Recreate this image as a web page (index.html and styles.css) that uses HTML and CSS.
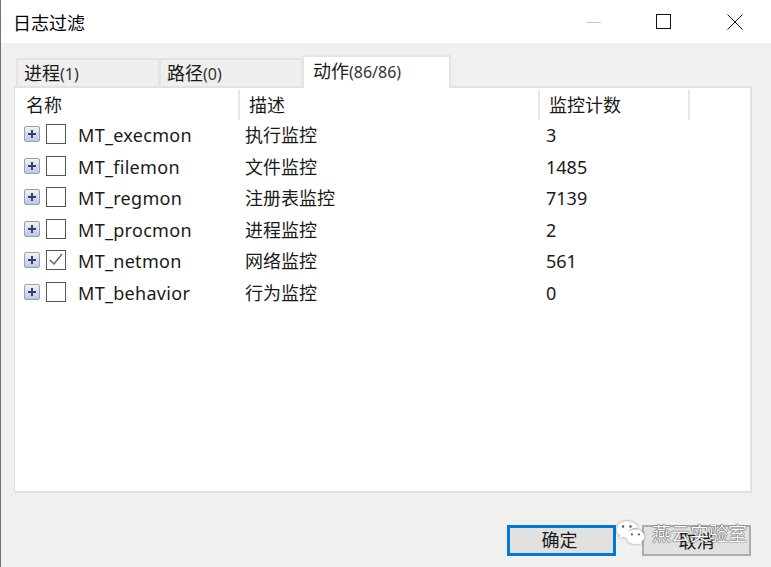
FILE: index.html
```html
<!doctype html>
<html>
<head>
    <meta charset="utf-8">
    <title>日志过滤</title>
    <link rel="stylesheet" href="styles.css">
</head>
<body>

<div class="window">

    <div class="titlebar">
        <span class="title">日志过滤</span>
        <div class="winbtns">
            <svg class="winbtn min" width="16" height="16" viewBox="0 0 16 16"><path d="M0 8.500H15" stroke="#c4c4c4" fill="none"/></svg>
            <svg class="winbtn" width="16" height="16" viewBox="0 0 16 16"><rect x="0.500" y="0.500" width="14" height="14" stroke="#111" fill="none"/></svg>
            <svg class="winbtn" width="16" height="16" viewBox="0 0 16 16"><path d="M0.500 0.500L15.500 15.500M15.500 0.500L0.500 15.500" stroke="#111" fill="none"/></svg>
        </div>
    </div>

    <div class="content">

        <div class="tabs">
            <div class="tab">进程<span class="num">(1)</span></div>
            <div class="tab">路径<span class="num">(0)</span></div>
            <div class="tab active">动作<span class="num">(86/86)</span></div>
        </div>

        <div class="panel">
            <div class="head">
                <div class="col-name">名称</div>
                <div class="col-desc">描述</div>
                <div class="col-count">监控计数</div>
                <div class="col-rest"></div>
            </div>

            <div class="row">
                <div class="col-name"><span class="plus"></span><span class="check"></span><span class="label">MT_execmon</span></div>
                <div class="col-desc">执行监控</div>
                <div class="col-count">3</div>
            </div>
            <div class="row">
                <div class="col-name"><span class="plus"></span><span class="check"></span><span class="label">MT_filemon</span></div>
                <div class="col-desc">文件监控</div>
                <div class="col-count">1485</div>
            </div>
            <div class="row">
                <div class="col-name"><span class="plus"></span><span class="check"></span><span class="label">MT_regmon</span></div>
                <div class="col-desc">注册表监控</div>
                <div class="col-count">7139</div>
            </div>
            <div class="row">
                <div class="col-name"><span class="plus"></span><span class="check"></span><span class="label">MT_procmon</span></div>
                <div class="col-desc">进程监控</div>
                <div class="col-count">2</div>
            </div>
            <div class="row">
                <div class="col-name"><span class="plus"></span>
                    <span class="check"><svg width="18" height="18" viewBox="0 0 18 18"><path d="M3 9L7 13L15 3" stroke="#666" stroke-width="1.500" fill="none"/></svg></span>
                    <span class="label">MT_netmon</span></div>
                <div class="col-desc">网络监控</div>
                <div class="col-count">561</div>
            </div>
            <div class="row">
                <div class="col-name"><span class="plus"></span><span class="check"></span><span class="label">MT_behavior</span></div>
                <div class="col-desc">行为监控</div>
                <div class="col-count">0</div>
            </div>
        </div>

        <div class="buttons">
            <div class="btn default">确定</div>
            <div class="btn">取消</div>
        </div>

    </div>

    <!-- watermark over the buttons -->
    <div class="watermark">
        <svg class="wm-icon" width="31" height="26" viewBox="0 0 32 28">
            <path d="M12 1C5.500 1 1 5 1 10C1 13 2.600 15.400 5 17L4 20L8 18.300C9.500 18.800 11 19 12.500 19C12 12 17 8 24 8.500C23 4 18 1 12 1Z" fill="#fff"/>
            <path d="M21 10C15.500 10 11.500 13.500 11.500 18C11.500 22.500 15.500 26 21 26C22.300 26 23.500 25.800 24.500 25.400L28 27L27.200 24C29.500 22.500 31 20.400 31 18C31 13.500 26.500 10 21 10Z" fill="#fff"/>
            <circle cx="8" cy="7" r="1.300" fill="#555"/>
            <circle cx="16" cy="7" r="1.300" fill="#555"/>
            <circle cx="17.500" cy="15.500" r="1.100" fill="#555"/>
            <circle cx="25" cy="15.500" r="1.100" fill="#555"/>
        </svg>
        <span class="wm-text">燕云实验室</span>
    </div>

</div>

</body>
</html>
```

FILE: styles.css
```css
* {
    box-sizing: border-box;
}

html, body {
    margin: 0;
    height: 100%;
}

body {
    overflow: hidden;
    color: #1a1a1a;
    font-family: "Noto Sans", "Noto Sans CJK SC", sans-serif;
    font-size: 18px;
}

.window {
    position: relative;
    width: 771px;
    height: 567px;
    display: flex;
    flex-direction: column;
    border-left: 1px solid #707070;
    background: #f0f0f0;
}

.titlebar {
    height: 43px;
    flex: none;
    display: flex;
    align-items: center;
    justify-content: space-between;
    padding-left: 12px;
    padding-right: 28px;
    background: #fff;
}

.title {
    color: #000;
    font-size: 18px;
}

.winbtns {
    display: flex;
    gap: 55px;
}

.winbtn.min {
    margin-right: -1px;
}

.content {
    flex: 1;
    padding: 12px 19px 0 13px;
}

.tabs {
    display: flex;
    height: 31px;
    padding-left: 2px;
    align-items: flex-end;
}

.tab {
    width: 143px;
    height: 28px;
    padding-left: 6px;
    line-height: 26px;
    border: 2px solid #e4e4e4;
    border-bottom: 0;
    border-right-width: 1px;
    background: #efefef;
}

.tab.active {
    width: 149px;
    padding-left: 9px;
    line-height: 28px;
    border-right-width: 2px;
    background: #fff;
    position: relative;
    z-index: 1;
    margin-bottom: -2px;
    height: 33px;
}

.num {
    color: #333;
    font-size: 16px;
}

.panel {
    height: 407px;
    padding-top: 2px;
    background: #fff;
    border: 2px solid #e2e2e2;
    border-left-width: 1px;
    width: 738px;
}

.head, .row {
    display: flex;
}

.head {
    height: 30px;
    line-height: 31px;
}

.head .col-name {
    padding-left: 11px;
}

.head .col-name, .head .col-desc, .head .col-count {
    border-right: 2px solid #e8e8e8;
}

.head .col-desc {
    padding-left: 9px;
}

.head .col-count {
    padding-left: 9px;
}

.col-name {
    width: 225px;
    flex: none;
    display: flex;
    align-items: center;
}

.col-desc {
    width: 300px;
    flex: none;
    padding-left: 5px;
}

.col-count {
    width: 150px;
    flex: none;
    padding-left: 6px;
}

.row {
    height: 31.500px;
    line-height: 31px;
}

.row .col-name {
    padding-left: 9px;
}

.plus {
    position: relative;
    width: 16px;
    height: 16px;
    flex: none;
    margin-bottom: 3px;
    border: 1px solid #8fa3bd;
    border-radius: 2px;
    background: linear-gradient(#eef3fa, #b9c9e0);
}

.plus::before {
    content: "";
    position: absolute;
    left: 3px;
    top: 6px;
    width: 8px;
    height: 2px;
    background: #2f4468;
}

.plus::after {
    content: "";
    position: absolute;
    left: 6px;
    top: 3px;
    width: 2px;
    height: 8px;
    background: #2f4468;
}

.check {
    width: 20px;
    height: 20px;
    flex: none;
    margin-left: 6px;
    margin-bottom: 3px;
    border: 1px solid #555;
    background: #fff;
    display: flex;
}

.label {
    margin-left: 12px;
    font-size: 18px;
    letter-spacing: 0.300px;
}

.buttons {
    display: flex;
    justify-content: flex-end;
    gap: 26px;
    margin-top: 32px;
    width: 737px;
}

.btn {
    width: 109px;
    height: 31px;
    text-align: center;
    line-height: 28px;
    background: #e1e1e1;
    border: 2px solid #adadad;
}

.btn.default {
    border: 3px solid #0078d7;
    line-height: 25px;
    padding-right: 4px;
}

.watermark {
    position: absolute;
    left: 614px;
    top: 519px;
    display: flex;
    align-items: center;
    gap: 6px;
}

.wm-icon {
    filter: drop-shadow(0 0 1px rgba(0, 0, 0, 0.450));
}

.wm-text {
    color: #fff;
    font-size: 19px;
    text-shadow: 0 0 1px #222, 0 0 1px #222;
}
```
